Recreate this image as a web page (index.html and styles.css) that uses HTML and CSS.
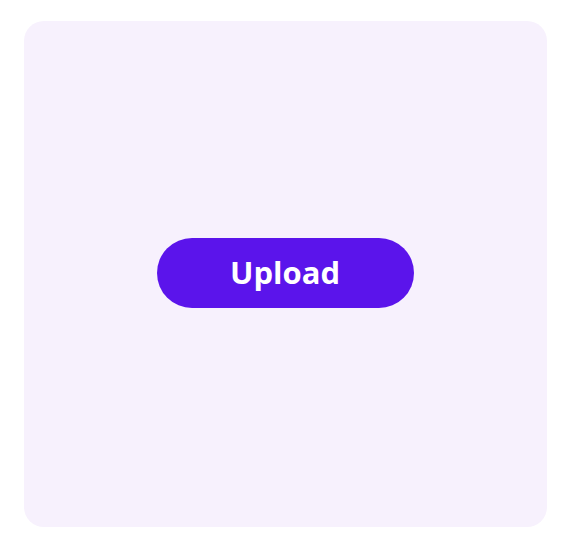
FILE: index.html
```html
<!DOCTYPE html>
<html>
<head>
<meta charset="utf-8">
<link rel="stylesheet" href="styles.css">
</head>
<body>
<div class="page">
  <div class="card">
    <button class="upload">Upload</button>
  </div>
</div>
</body>
</html>
```
FILE: styles.css
```css
html, body { margin: 0; padding: 0; background: #ffffff; }
.page {
  width: 570px;
  height: 546px;
  padding: 21px 23px 19px 24px;
  box-sizing: border-box;
}
.card {
  width: 100%;
  height: 100%;
  background: #f7f1fd;
  border-radius: 20px;
  display: flex;
  align-items: center;
  justify-content: center;
}
.upload {
  width: 257px;
  height: 70px;
  border: none;
  border-radius: 35px;
  background: #5b14eb;
  color: #ffffff;
  font-family: "Open Sans", sans-serif;
  font-weight: 700;
  font-size: 31px;
  line-height: 1;
  padding: 0 0 2px 0;
  margin-left: -1px;
  margin-top: -2px;
}
```
